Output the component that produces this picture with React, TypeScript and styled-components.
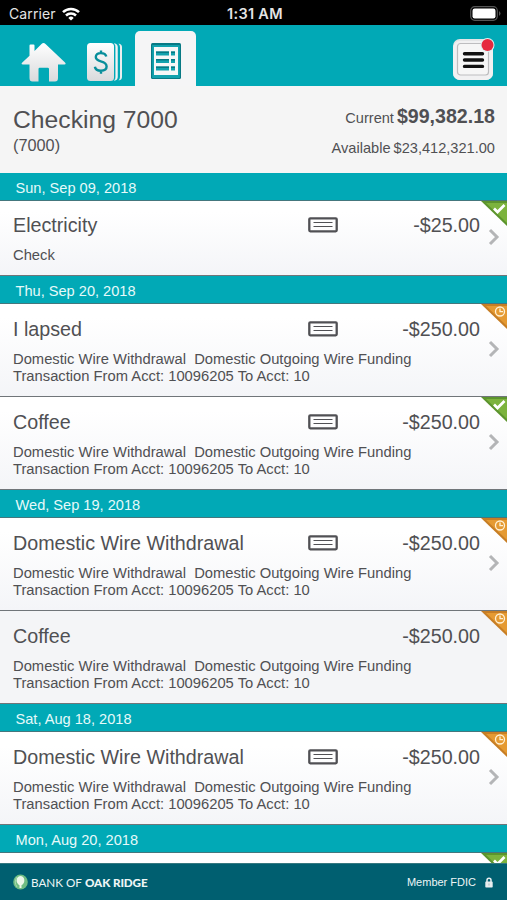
import React from "react";
import styled, { createGlobalStyle } from "styled-components";

const GlobalStyle = createGlobalStyle`
  * { box-sizing: border-box; }
  body { margin: 0; background: #fff; }
`;

const Screen = styled.div`
  width: 507px;
  height: 900px;
  overflow: hidden;
  display: flex;
  flex-direction: column;
  background: #f5f5f6;
  color: #505053;
  font-family: "Liberation Sans", Arial, sans-serif;
`;

const StatusBar = styled.header`
  flex: none;
  height: 25px;
  padding: 2px 6px 0 9px;
  background: #000;
  color: #e4e4e4;
  display: grid;
  grid-template-columns: 1fr auto 1fr;
  align-items: center;
  font: 400 14px/22px Inter, sans-serif;
`;

const Carrier = styled.div`
  display: flex;
  align-items: center;
  gap: 6px;
  letter-spacing: 0.1px;
`;

const Clock = styled.div`
  font-weight: 600;
  font-size: 14.5px;
  letter-spacing: 0.3px;
`;

const BatterySlot = styled.div`
  display: flex;
  justify-content: flex-end;
`;

const NavBar = styled.nav`
  flex: none;
  height: 61px;
  padding: 0 12px 0 21px;
  background: #01a9b6;
  display: flex;
  align-items: flex-end;
`;

const NavIcon = styled.div<{ $gap: number }>`
  display: flex;
  margin-right: ${(p) => p.$gap}px;
  padding-bottom: 4px;
`;

const ActiveTab = styled.div`
  width: 61px;
  height: 55px;
  padding-top: 12px;
  display: flex;
  justify-content: center;
  border-radius: 5px 5px 0 0;
  background: #f5f5f6;
`;

const MenuButton = styled.button`
  margin: 0 0 5px auto;
  padding: 0;
  border: 0;
  background: none;
  display: flex;
`;

const Summary = styled.section`
  flex: none;
  height: 87px;
  padding: 18px 12px 0 13px;
  background: #f5f5f5;
  display: flex;
  justify-content: space-between;
`;

const AccountName = styled.h1`
  margin: 0;
  padding-top: 1px;
  font-size: 24.7px;
  line-height: 29px;
  font-weight: 400;
`;

const AccountNumber = styled.div`
  font-size: 16.3px;
  line-height: 22px;
`;

const Balances = styled.div`
  text-align: right;
  font-size: 14.6px;
`;

const Balance = styled.div<{ $height: number }>`
  height: ${(p) => p.$height}px;
  line-height: 24px;
  display: flex;
  justify-content: flex-end;
  align-items: baseline;
  gap: 3px;

  strong { font-size: 19.6px; }
`;

const List = styled.main`
  flex: 1;
  min-height: 0;
  overflow: hidden;
`;

const DateBar = styled.h2`
  margin: 0;
  height: 28px;
  padding-left: 15.5px;
  border-bottom: 1px solid #44777d;
  background: #01a9b6;
  color: #e6fafa;
  font-size: 14.6px;
  line-height: 30px;
  font-weight: 400;
`;

const Row = styled.article<{ $short: boolean; $flat: boolean }>`
  position: relative;
  height: ${(p) => (p.$short ? 75 : 93)}px;
  padding: ${(p) => (p.$short ? 12 : 13)}px 0 0 13px;
  border-bottom: 1px solid #707579;
  background: ${(p) => (p.$flat ? "#f4f5f7" : "linear-gradient(#fff 15%, #f4f5f8)")};
`;

const RowHead = styled.div`
  display: grid;
  grid-template-columns: 295px 1fr auto;
  align-items: center;
  height: 24px;
  padding-right: 27px;
  font-size: 19.7px;
  line-height: 24px;
`;

const Description = styled.p`
  margin: 10px 0 0;
  white-space: pre;
  font-size: 14.75px;
  line-height: 17px;
`;

const Corner = styled.svg`
  position: absolute;
  top: 0;
  right: 0;
`;

const Chevron = styled.svg`
  position: absolute;
  right: 7px;
  top: calc(50% - 10px);
`;

const Footer = styled.footer`
  flex: none;
  height: 37px;
  padding: 0 14px 0 13px;
  border-top: 1px solid #357880;
  background: #005f70;
  color: #eef6f6;
  display: flex;
  align-items: center;
  justify-content: space-between;
`;

const Brand = styled.div`
  display: flex;
  align-items: center;
  font: 400 11.7px/16px Lato, sans-serif;
  gap: 3px;

  b { font-weight: 900; letter-spacing: -0.1px; }
`;

const Member = styled.div`
  display: flex;
  align-items: center;
  gap: 9px;
  font-size: 11px;
`;

const Wifi = () => (
  <svg width="18" height="14" viewBox="0 0 18 14" fill="none" stroke="#fff" strokeWidth="2.5">
    <path d="M1 5.2a11.3 11.3 0 0 1 16 0M4 8.5a7.1 7.1 0 0 1 10 0" />
    <path d="M9 13.6 6.3 10.9a3.8 3.8 0 0 1 5.4 0Z" fill="#fff" stroke="none" />
  </svg>
);

const Battery = () => (
  <svg width="31" height="15" viewBox="0 0 31 15">
    <rect x=".7" y=".7" width="26.6" height="13.6" rx="4" fill="#000" stroke="#555" strokeWidth="1.2" />
    <rect x="2.5" y="2.5" width="23" height="10" rx="2.2" fill="#fff" />
    <path d="M29 5q3 2.5 0 5Z" fill="#555" />
  </svg>
);

const Silver = ({ id }: { id: string }) => (
  <linearGradient id={id} x1="0" y1="0" x2="0" y2="1">
    <stop stopColor="#fff" />
    <stop offset="1" stopColor="#d9dadc" />
  </linearGradient>
);

const Home = () => (
  <svg width="45" height="39" viewBox="0 0 45 39">
    <defs><Silver id="home" /></defs>
    <path d="M22.5 0q1 0 2 1L44 19.5q1.5 2-.5 2H37V35q0 3.5-3 3.5h-6V26q0-1.3-1.3-1.3h-8Q17.5 24.700 17.500 26v12.500h-6q-3 0-3-3.500V21.500H2q-2.500 0-.7-2L8.500 12.800V2.500q0-1 1-1h3q1 0 1 1V8L20.500 1q1-1 2-1Z" fill="url(#home)" />
  </svg>
);

const Cash = () => (
  <svg width="36" height="39" viewBox="0 0 36 39">
    <defs><Silver id="cash" /></defs>
    <path d="M27.500 0.500Q30.500 1 30.500 4v30q0 3-3 3.500 1.200-1.500 1.200-3.500V4q0-2-1.200-3.500Z" fill="#f3f3f4" stroke="#f3f3f4" strokeWidth=".5" />
    <path d="M31.500 0.500Q35 1 35 4v30q0 3-3.500 3.500 1.500-1.500 1.500-3.500V4q0-2-1.500-3.500Z" fill="#e9eeef" />
    <rect x="0" y="0" width="27" height="38" rx="3.500" fill="url(#cash)" />
    <path d="M19.300 13.500q-.8-3.400-5.500-3.400-5 0-5 4 0 3 5 4.300 5.800 1.400 5.800 5.200 0 4.200-5.700 4.200-5.400 0-6-4M14 7.500v3M14 27.500v3.200" fill="none" stroke="#078e9b" strokeWidth="2.400" />
  </svg>
);

const Ledger = () => (
  <svg width="30" height="36" viewBox="0 0 30 36">
    <rect x="0" y="0" width="30" height="36" rx="1.500" fill="#087984" />
    <rect x="1.200" y="2" width="27.600" height="33" fill="#13a2ae" />
    <rect x="3" y="4" width="24" height="28" fill="#f7f7f7" />
    <path d="M5 10.500h13M20 10.500h4M5 18h13M20 18h4M5 25.500h13M20 25.500h4" stroke="#13a2ae" strokeWidth="4" />
    <path d="M5 9.200h13M20 9.200h4M5 16.700h13M20 16.700h4M5 24.200h13M20 24.200h4" stroke="#087984" strokeWidth="1.400" />
  </svg>
);

const Menu = () => (
  <svg width="43" height="44" viewBox="0 0 43 44">
    <rect x="1" y="2" width="40" height="41" rx="7" fill="#e4e5e6" />
    <rect x="1" y="4" width="40" height="39" rx="7" fill="#f1f1f2" />
    <rect x="5.500" y="6.500" width="31" height="31.500" rx="3" fill="#f6f6f6" stroke="#bdbdbf" strokeWidth="1.200" />
    <path d="M12.500 16.700h18M12.500 23h18M12.500 29.400h18" stroke="#111" strokeWidth="3.400" strokeLinecap="round" />
    <circle cx="35.500" cy="8" r="7" fill="#e0f0f1" />
    <circle cx="35.500" cy="8" r="6" fill="#e6293f" />
  </svg>
);

const CheckSlip = () => (
  <svg width="30" height="16" viewBox="0 0 30 16" fill="none" stroke="#505054">
    <rect x="1.300" y="1.300" width="27.400" height="13" rx="1" strokeWidth="2.300" />
    <path d="M5.500 5.500h19M5.500 9.500h19" strokeWidth="1.200" />
  </svg>
);

const CornerMark = ({ cleared }: { cleared: boolean }) => (
  <Corner width="26" height="25" viewBox="0 0 26 25">
    <path d="M0 0h26v25Z" fill={cleared ? "#5c942d" : "#c77e25"} />
    <path d="M5 2h21v20Z" fill={cleared ? "#7cb33d" : "#e59a32"} />
    {cleared ? (
      <path d="m13 7.500 3.500 3.500 7-7" fill="none" stroke="#fff" strokeWidth="2.700" />
    ) : (
      <g fill="none" stroke="#fff1d5" strokeWidth="1.300">
        <circle cx="19" cy="7.500" r="4.500" />
        <path d="M19 4.500v3.200h3" />
      </g>
    )}
  </Corner>
);

const ChevronIcon = () => (
  <Chevron width="12" height="18" viewBox="0 0 12 18">
    <path d="m2 2 7 7-7 7" fill="none" stroke="#b4b5b7" strokeWidth="3" />
  </Chevron>
);

const Oak = () => (
  <svg width="15" height="16" viewBox="0 0 15 16">
    <ellipse cx="7.500" cy="8" rx="7.300" ry="7.600" fill="#70bd83" />
    <path d="M7.500 2C4 2.500 3 5.500 4 8.500q1 2 2.500 2.700V14h2v-2.800Q10 10.500 11 8.500C12 5.500 11 2.500 7.500 2Z" fill="#edf8ea" />
    <path d="M4 3Q.5 8 4 13" fill="none" stroke="#a6d9ac" />
  </svg>
);

const Lock = () => (
  <svg width="8" height="11" viewBox="0 0 8 11">
    <path d="M2 5V3.200a2 2 0 0 1 4 0V5" fill="none" stroke="#e8eeef" strokeWidth="1.500" />
    <rect x=".3" y="4.600" width="7.400" height="6" rx=".8" fill="#e8eeef" />
    <path d="M4 6.500v2" stroke="#a5babf" />
  </svg>
);

interface Transaction {
  title: string;
  amount: string;
  cleared: boolean;
  note?: string;
  plain?: boolean;
}

const WIRE =
  "Domestic Wire Withdrawal  Domestic Outgoing Wire Funding\nTransaction From Acct: 10096205 To Acct: 10";

const groups: { date: string; items: Transaction[] }[] = [
  { date: "Sun, Sep 09, 2018", items: [{ title: "Electricity", amount: "-$25.00", cleared: true, note: "Check" }] },
  {
    date: "Thu, Sep 20, 2018",
    items: [
      { title: "I lapsed", amount: "-$250.00", cleared: false },
      { title: "Coffee", amount: "-$250.00", cleared: true },
    ],
  },
  {
    date: "Wed, Sep 19, 2018",
    items: [
      { title: "Domestic Wire Withdrawal", amount: "-$250.00", cleared: false },
      { title: "Coffee", amount: "-$250.00", cleared: false, plain: true },
    ],
  },
  { date: "Sat, Aug 18, 2018", items: [{ title: "Domestic Wire Withdrawal", amount: "-$250.00", cleared: false }] },
  { date: "Mon, Aug 20, 2018", items: [{ title: "", amount: "", cleared: true, note: "", plain: false }] },
];

const TransactionRow = ({ item }: { item: Transaction }) => (
  <Row $short={item.note !== undefined} $flat={!!item.plain}>
    {item.title && (
      <>
        <RowHead>
          <span>{item.title}</span>
          {item.plain ? <span /> : <CheckSlip />}
          <span>{item.amount}</span>
        </RowHead>
        <Description>{item.note ?? WIRE}</Description>
        {!item.plain && <ChevronIcon />}
      </>
    )}
    <CornerMark cleared={item.cleared} />
  </Row>
);

export default function App() {
  return (
    <Screen>
      <GlobalStyle />
      <StatusBar>
        <Carrier>Carrier <Wifi /></Carrier>
        <Clock>1:31 AM</Clock>
        <BatterySlot><Battery /></BatterySlot>
      </StatusBar>
      <NavBar>
        <NavIcon $gap={21}><Home /></NavIcon>
        <NavIcon $gap={12}><Cash /></NavIcon>
        <ActiveTab><Ledger /></ActiveTab>
        <MenuButton aria-label="Menu"><Menu /></MenuButton>
      </NavBar>
      <Summary>
        <div>
          <AccountName>Checking 7000</AccountName>
          <AccountNumber>(7000)</AccountNumber>
        </div>
        <Balances>
          <Balance $height={32}><span>Current</span><strong>$99,382.18</strong></Balance>
          <Balance $height={24}><span>Available</span><span>$23,412,321.00</span></Balance>
        </Balances>
      </Summary>
      <List>
        {groups.map((group) => (
          <section key={group.date}>
            <DateBar>{group.date}</DateBar>
            {group.items.map((item, i) => <TransactionRow key={i} item={item} />)}
          </section>
        ))}
      </List>
      <Footer>
        <Brand><Oak /><span>BANK OF</span><b>OAK RIDGE</b></Brand>
        <Member>Member FDIC <Lock /></Member>
      </Footer>
    </Screen>
  );
}
